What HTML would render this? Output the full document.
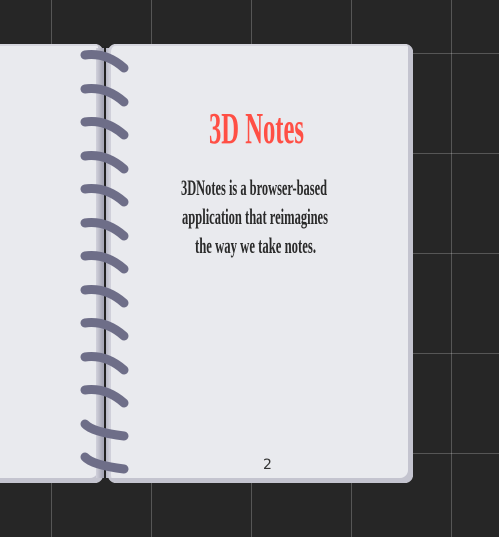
<!DOCTYPE html>
<html><head><meta charset="utf-8"><style>
html,body{margin:0;padding:0;}
body{width:499px;height:537px;overflow:hidden;background:#262626;position:relative;
background-image:linear-gradient(90deg,rgba(255,255,255,0.22) 1px,transparent 1px),linear-gradient(rgba(255,255,255,0.22) 1px,transparent 1px);
background-size:100px 100px;background-position:51px 53px;}
.pg{position:absolute;top:44px;height:439px;background:#e9eaee;box-shadow:inset -5px -5px 0 #c4c4cf,inset 0 2px 0 #d6d6de;}
#l{left:-10px;width:113px;border-radius:0 8px 8px 0;}
#r{left:108px;width:305px;border-radius:8px;box-shadow:inset -5px -5px 0 #c4c4cf,inset 3px 0 0 #d0d0da,inset 0 2px 0 #d6d6de;}
#num{position:absolute;left:263px;top:457px;font:14px "DejaVu Sans",sans-serif;color:#333;}
</style></head><body>
<div class="pg" id="l"></div>
<div class="pg" id="r"></div>
<svg width="499" height="537" style="position:absolute;left:0;top:0">
<defs><linearGradient id="sp" x1="0" x2="1"><stop offset="0" stop-color="#d2d2dc"/><stop offset="0.5" stop-color="#a4a4b4"/><stop offset="1" stop-color="#d2d2dc"/></linearGradient></defs>
<rect x="96" y="48" width="14" height="430" fill="url(#sp)"/>
<line x1="105" y1="46" x2="105" y2="478" stroke="#222" stroke-width="2"/>
<g fill="none" stroke="#6e6e88" stroke-width="9" stroke-linecap="round">
<path d="M85 55 Q106 52 124 68"/><path d="M85 89 Q106 86 124 102"/><path d="M85 122 Q106 119 124 135"/>
<path d="M85 156 Q106 153 124 169"/><path d="M85 189 Q106 186 124 202"/><path d="M85 223 Q106 220 124 236"/>
<path d="M85 256 Q106 253 124 269"/><path d="M85 290 Q106 287 124 303"/><path d="M85 323 Q106 320 124 336"/>
<path d="M85 357 Q106 354 124 370"/><path d="M85 390 Q106 387 124 403"/><path d="M85 424 Q92 432 124 436"/>
<path d="M85 457 Q92 465 124 469"/>
</g>
<g font-family="Liberation Serif, serif" font-weight="bold">
<text x="209" y="143" font-size="44" fill="#ff4f45" textLength="95" lengthAdjust="spacingAndGlyphs">3D Notes</text>
<g font-size="22" fill="#2a2a2a">
<text x="181" y="195" textLength="146" lengthAdjust="spacingAndGlyphs">3DNotes is a browser-based</text>
<text x="182" y="224" textLength="146" lengthAdjust="spacingAndGlyphs">application that reimagines</text>
<text x="195" y="253" textLength="121" lengthAdjust="spacingAndGlyphs">the way we take notes.</text>
</g></g>
</svg>
<div id="num">2</div>
</body></html>
